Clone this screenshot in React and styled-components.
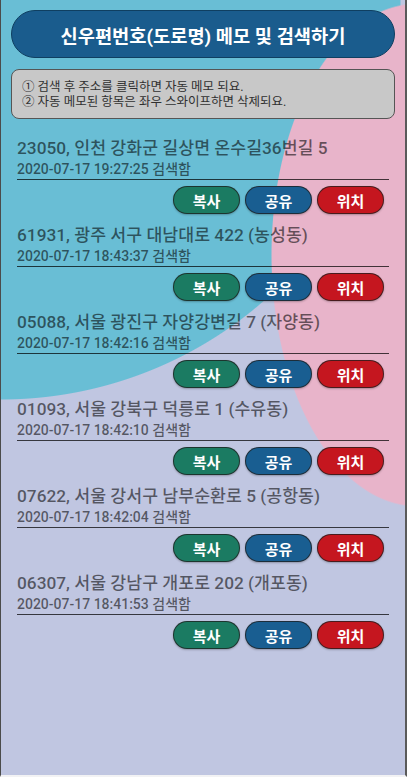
import React from 'react'
import styled, { createGlobalStyle } from 'styled-components'

const GlobalStyle = createGlobalStyle`
  html, body {
    margin: 0;
    padding: 0;
  }
  body {
    font-family: Roboto, "Noto Sans CJK KR", "Noto Sans", sans-serif;
  }
  * {
    box-sizing: border-box;
  }
`

const Screen = styled.div`
  min-height: 100vh;
  padding: 10px 10px 0 10px;
  border-left: 1px solid #4b4b4b;
  border-right: 2px solid #5a5a5a;
  border-bottom: 2px solid #f2f2f4;
  background-color: #c0c6e1;
  background-image:
    radial-gradient(146px 252px at 416px 255px, #e8b4ca calc(100% - 1px), transparent 100%),
    radial-gradient(circle 400px at 0 0, #69bed5 calc(100% - 1px), transparent 100%);
  background-repeat: no-repeat;
`

const Header = styled.h1`
  height: 48px;
  margin: 0 0 11px;
  border-radius: 24px;
  border: 1px solid #0f3f61;
  background: #1a5c8d;
  color: #fff;
  font-size: 18.7px;
  font-weight: 700;
  display: flex;
  align-items: center;
  justify-content: center;
`

const Notice = styled.div`
  height: 50px;
  padding: 0 10px;
  border: 1px solid #555;
  border-radius: 8px;
  background: #c8c8c8;
  color: #303030;
  font-size: 12.5px;
  line-height: 15px;
  display: flex;
  flex-direction: column;
  justify-content: center;
`

const List = styled.div`
  padding: 18px 6px 0;
  display: flex;
  flex-direction: column;
`

const Row = styled.div`
  padding-bottom: 10px;
`

const Address = styled.div`
  font-size: 17.3px;
  font-weight: 500;
  line-height: 22px;
  color: rgba(0, 0, 0, 0.56);
  white-space: nowrap;
`

const Searched = styled.div`
  margin-top: 1px;
  font-size: 14px;
  font-weight: 500;
  line-height: 18px;
  color: rgba(0, 0, 0, 0.56);
`

const Divider = styled.div`
  margin-top: 1px;
  height: 1px;
  background: rgba(0, 0, 0, 0.72);
`

const Actions = styled.div`
  margin: 6px 5px 0 0;
  display: flex;
  justify-content: flex-end;
  gap: 5px;
`

const colors = {
  copy: '#1b7b62',
  share: '#195e91',
  map: '#c5161f',
}

const ActionButton = styled.button`
  width: 67px;
  height: 28px;
  padding: 0;
  border-radius: 14px;
  border: 1px solid rgba(30, 30, 30, 0.75);
  background: ${p => colors[p.$kind]};
  color: #fff;
  font-family: inherit;
  font-size: 15px;
  font-weight: 700;
  box-shadow: 0 1px 2px rgba(0, 0, 0, 0.25);
`

const memos = [
  { addr: '23050, 인천 강화군 길상면 온수길36번길 5', time: '2020-07-17 19:27:25' },
  { addr: '61931, 광주 서구 대남대로 422 (농성동)', time: '2020-07-17 18:43:37' },
  { addr: '05088, 서울 광진구 자양강변길 7 (자양동)', time: '2020-07-17 18:42:16' },
  { addr: '01093, 서울 강북구 덕릉로 1 (수유동)', time: '2020-07-17 18:42:10' },
  { addr: '07622, 서울 강서구 남부순환로 5 (공항동)', time: '2020-07-17 18:42:04' },
  { addr: '06307, 서울 강남구 개포로 202 (개포동)', time: '2020-07-17 18:41:53' },
]

const App = () => {
  return (
    <>
      <GlobalStyle />
      <Screen>
        <Header>신우편번호(도로명) 메모 및 검색하기</Header>
        <Notice>
          <div>① 검색 후 주소를 클릭하면 자동 메모 되요.</div>
          <div>② 자동 메모된 항목은 좌우 스와이프하면 삭제되요.</div>
        </Notice>
        <List>
          {memos.map((m, i) => (
            <Row key={i}>
              <Address>{m.addr}</Address>
              <Searched>{m.time} 검색함</Searched>
              <Divider />
              <Actions>
                <ActionButton $kind="copy">복사</ActionButton>
                <ActionButton $kind="share">공유</ActionButton>
                <ActionButton $kind="map">위치</ActionButton>
              </Actions>
            </Row>
          ))}
        </List>
      </Screen>
    </>
  )
}

export default App
